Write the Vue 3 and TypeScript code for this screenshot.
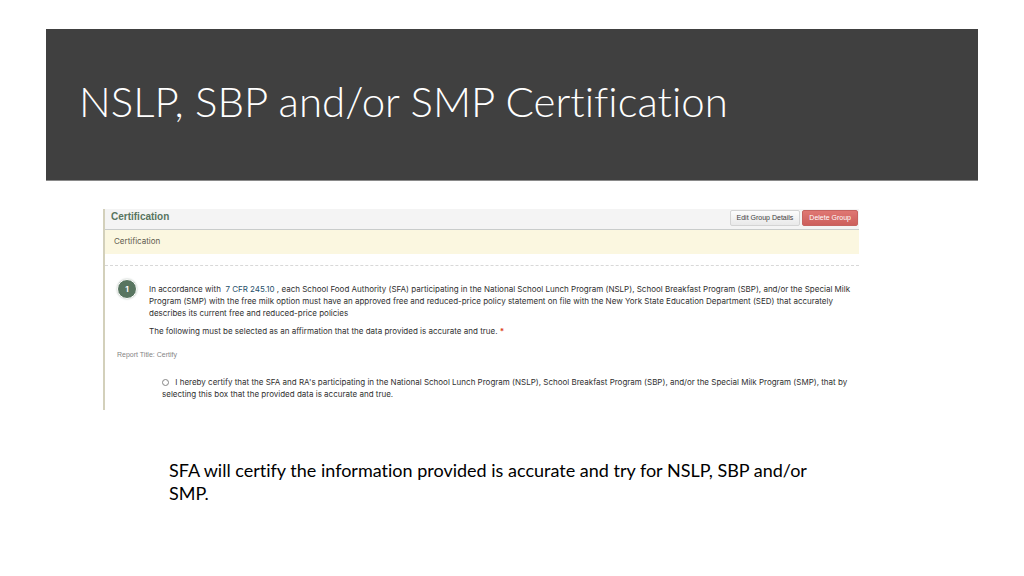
<script setup lang="ts">
import { ref } from 'vue'

const certified = ref<string>('')
</script>

<template>
  <main class="slide">
    <header class="banner">
      <h1>NSLP, SBP and/or SMP Certification</h1>
    </header>

    <section class="panel" aria-labelledby="group-title">
      <div class="panel-head">
        <h2 id="group-title">Certification</h2>
        <div class="actions">
          <button type="button" class="btn">Edit Group Details</button>
          <button type="button" class="btn danger">Delete Group</button>
        </div>
      </div>
      <h3 class="subhead">Certification</h3>

      <div class="question">
        <span class="badge">1</span>
        <div class="text">
          <p>
            In accordance with &nbsp;<a href="#">7 CFR 245.10</a> , each School Food Authority (SFA) participating in the National School Lunch Program (NSLP), School Breakfast Program (SBP), and/or the Special Milk<br />
            Program (SMP) with the free milk option must have an approved free and reduced-price policy statement on file with the New York State Education Department (SED) that accurately<br />
            describes its current free and reduced-price policies
          </p>
          <p>
            The following must be selected as an affirmation that the data provided is accurate and true.
            <span class="required">*</span>
          </p>
        </div>
      </div>

      <p class="report">Report Title: Certify</p>

      <label class="choice" for="certify">
        <input id="certify" v-model="certified" type="radio" name="certify" value="yes" />
        I hereby certify that the SFA and RA's participating in the National School Lunch Program (NSLP), School Breakfast Program (SBP), and/or the Special Milk Program (SMP), that by<br />
        selecting this box that the provided data is accurate and true.
      </label>
    </section>

    <p class="caption">
      SFA will certify the information provided is accurate and try for NSLP, SBP and/or<br />
      SMP.
    </p>
  </main>
</template>

<style>
body {
  margin: 0;
  background: #fff;
}
</style>

<style scoped>
.slide {
  padding: 29px 46px 0;
  color: #000;
}
h1,
h2,
h3,
p {
  margin: 0;
}
.banner {
  display: flex;
  align-items: center;
  padding: 47px 33px 53px;
  border-bottom: 1px solid #8a8a8a;
  background: #404040;
}
h1 {
  color: #fff;
  font: 300 42px/51px Lato, sans-serif;
  font-variant-ligatures: none;
}
.panel {
  margin: 28px 119px 0 57px;
  padding-bottom: 10px;
  border-left: 2px solid #d3d0bb;
  color: #303030;
  font: 8px/12px Inter, "Liberation Sans", sans-serif;
  white-space: nowrap;
}
.panel-head {
  display: flex;
  align-items: center;
  justify-content: space-between;
  height: 20px;
  padding: 0 1px 0 6px;
  border-bottom: 1px solid #c9cccb;
  background: #f4f4f4;
}
h2 {
  padding-bottom: 4px;
  color: #587560;
  font: 700 10px/12px "Liberation Sans", Arial, sans-serif;
}
.actions {
  display: flex;
  gap: 2px;
  padding-bottom: 3px;
}
.btn {
  height: 16px;
  padding: 0 6px;
  border: 1px solid #d4d4d4;
  border-radius: 2px;
  background: linear-gradient(#fcfcfc, #e9e9e9);
  color: #404040;
  font: 7px/12px "Liberation Sans", Arial, sans-serif;
}
.danger {
  border-color: #c66360;
  background: linear-gradient(#df7773, #cd5f5c);
  color: #fff;
}
.subhead {
  padding: 5px 9px 7px;
  background: #fbf7e0;
  color: #5f5b4f;
  font-size: 8px;
  font-weight: 400;
}
.question {
  display: flex;
  gap: 12px;
  margin-top: 11px;
  padding: 13px 0 0 12px;
  border-top: 1px dashed #d8d8d8;
}
.badge {
  display: grid;
  flex: none;
  place-items: center;
  width: 18px;
  height: 18px;
  border: 1px solid #fff;
  border-radius: 50%;
  background: #587560;
  box-shadow: 0 0 2px #a8b5ab;
  color: #fff;
  font-weight: 700;
}
.text {
  display: grid;
  gap: 6px;
  padding-top: 4px;
}
a {
  color: #28506b;
  text-decoration: none;
}
.required {
  color: #dd4426;
  font-weight: 700;
}
.report {
  margin: 12px 0 0 12px;
  color: #858585;
  font: 7px/12px "Liberation Sans", Arial, sans-serif;
}
.choice {
  display: block;
  margin: 15px 0 0 57px;
}
.choice input {
  appearance: none;
  width: 7px;
  height: 7px;
  margin: 0 4px 0 0;
  border: 1px solid #858585;
  border-radius: 50%;
  background: #fff;
  vertical-align: -1px;
}
.choice input:checked {
  background: #587560;
}
.caption {
  margin: 49px 0 0 123px;
  font: 18px/23px Lato, sans-serif;
  font-variant-ligatures: none;
}
</style>
